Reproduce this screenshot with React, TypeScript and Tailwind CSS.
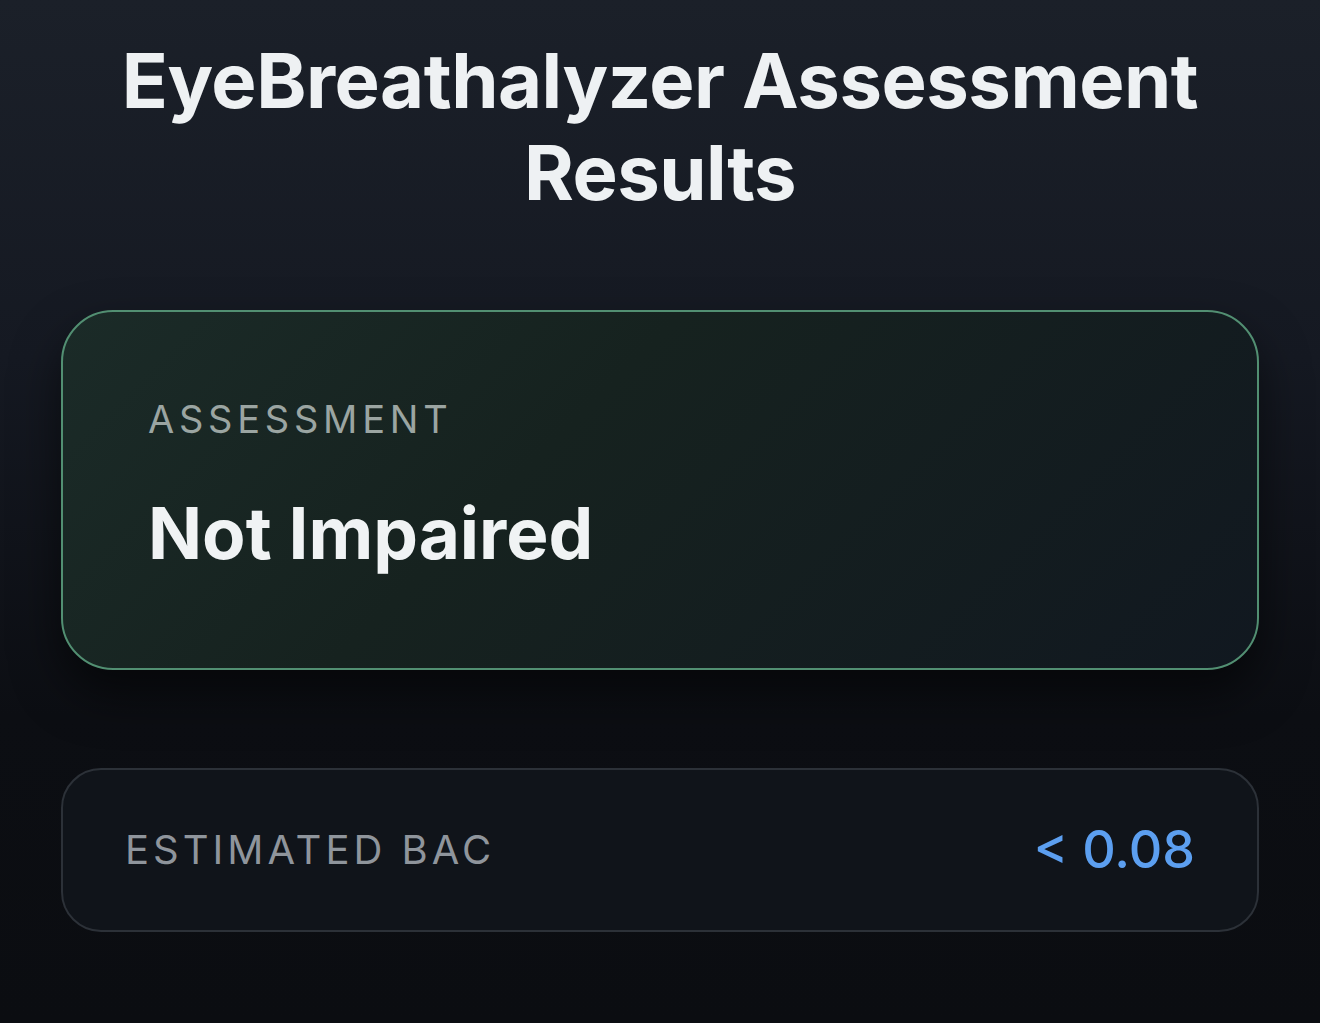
import React from "react";

export default function App() {
  return (
    <div className="w-[1320px] h-[1023px] overflow-hidden bg-[linear-gradient(180deg,#1b2029_0%,#151922_35%,#0c0e13_70%,#0b0d11_100%)] px-[61px] pt-[34px] font-['Inter',sans-serif]">
      <h1 className="text-center text-[76px] leading-[92px] font-bold tracking-[-0.5px] text-[#eef1f3]">
        EyeBreathalyzer Assessment
        <br />
        Results
      </h1>

      <div className="mt-[92px] h-[360px] rounded-[52px] border-[2.5px] border-[#528f72] bg-[linear-gradient(135deg,#1b2b28_0%,#16221f_40%,#111820_100%)] pl-[85px] pt-[88px] shadow-[0_24px_48px_rgba(0,0,0,0.55)]">
        <div className="text-[38px] leading-none tracking-[0.125em] text-[#9ba5a2]">ASSESSMENT</div>
        <div className="mt-[60px] text-[71px] leading-none font-bold text-[#f0f3f4]">Not Impaired</div>
      </div>

      <div className="mt-[98px] flex h-[164px] items-center justify-between rounded-[40px] border-2 border-[#2c3138] bg-[#10141a] px-[62px]">
        <div className="text-[40px] leading-none tracking-[0.1em] text-[#8f959c]">ESTIMATED BAC</div>
        <div className="text-[52px] leading-none font-medium text-[#5c9ff0]">&lt; 0.08</div>
      </div>
    </div>
  );
}
